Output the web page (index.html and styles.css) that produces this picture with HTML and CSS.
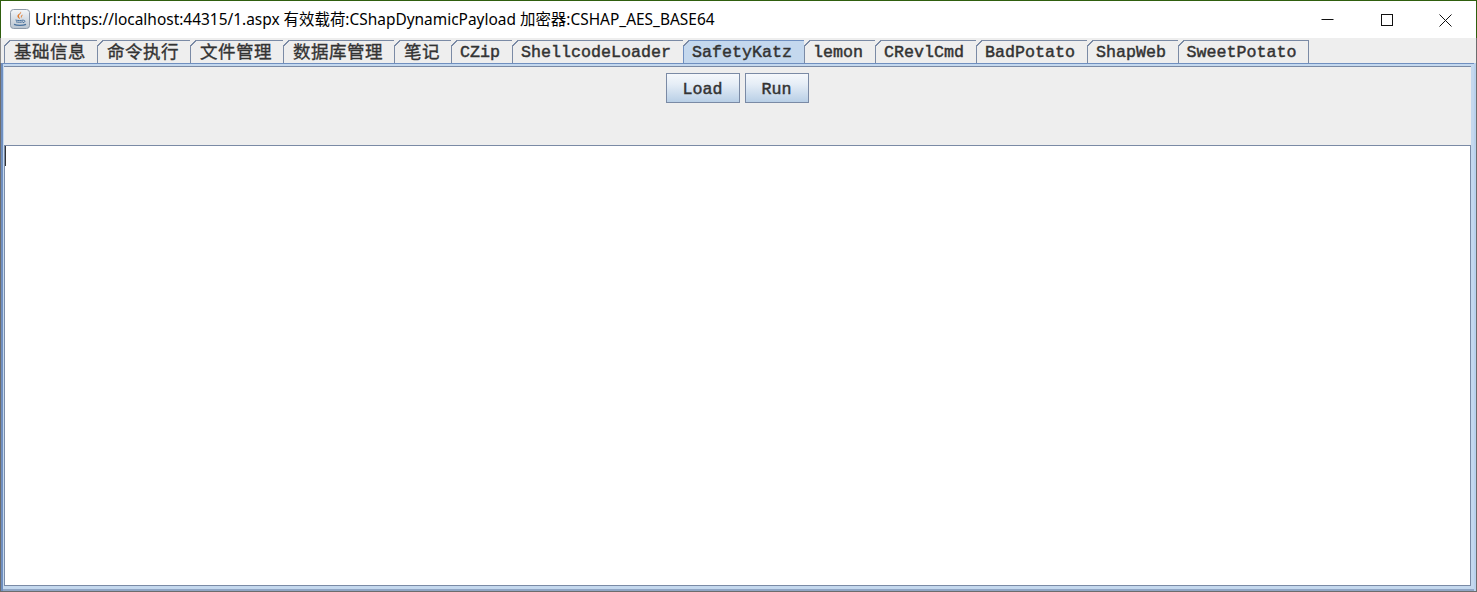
FILE: index.html
```html
<!DOCTYPE html>
<html lang="zh">
<head>
<meta charset="utf-8">
<title>Url:https://localhost:44315/1.aspx</title>
<link rel="stylesheet" href="styles.css">
</head>
<body>
<div class="window">
  <header class="titlebar">
    <svg class="app-icon" width="20" height="20" viewBox="0 0 20 20">
      <defs><linearGradient id="ibg" x1="0" y1="0" x2="0" y2="1"><stop offset="0" stop-color="#f4f6f8"/><stop offset="1" stop-color="#b9c4d0"/></linearGradient></defs>
      <rect x="0.5" y="0.5" width="19" height="19" rx="3" fill="url(#ibg)" stroke="#8d99a8"/>
      <path d="M11 2.500c1 2-2.500 3-2 5 .2 1 1 1.500 1 2.500-1.800-1-3-2-2.500-3.500.5-1.500 3-2 3.500-4zM12.500 5.500c.5 1.500-1.500 2-1.200 4-1-1.500-.3-3 1.200-4z" fill="#e0792a"/>
      <path d="M5.500 11c2 .7 6 .7 8 0M6 12.800c2 .6 5 .6 7 0M13.500 11.500c2-.5 2 1.800-.5 2.200" fill="none" stroke="#47709c" stroke-width="1"/>
      <path d="M4 15.300c3 1.300 9 1.300 12 0" fill="none" stroke="#47709c" stroke-width="1.300"/>
    </svg>
    <span class="title-text">Url:https://localhost:44315/1.aspx 有效载荷:CShapDynamicPayload 加密器:CSHAP_AES_BASE64</span>
    <div class="win-controls">
      <svg class="win-btn" width="46" height="20" viewBox="0 0 46 20"><path d="M17.500 9.500h12" stroke="#111" fill="none"/></svg>
      <svg class="win-btn" width="46" height="20" viewBox="0 0 46 20"><rect x="18.500" y="4.500" width="11" height="11" stroke="#111" fill="none"/></svg>
      <svg class="win-btn" width="46" height="20" viewBox="0 0 46 20"><path d="M17.500 4.500l12 12M29.500 4.500l-12 12" stroke="#111" fill="none"/></svg>
    </div>
  </header>
  <nav class="tabs">
    <div class="tab cjk w94">基础信息</div>
    <div class="tab cjk w93">命令执行</div>
    <div class="tab cjk w93">文件管理</div>
    <div class="tab cjk w111">数据库管理</div>
    <div class="tab cjk w57">笔记</div>
    <div class="tab w61">CZip</div>
    <div class="tab w171">ShellcodeLoader</div>
    <div class="tab active w121">SafetyKatz</div>
    <div class="tab w71">lemon</div>
    <div class="tab w101">CRevlCmd</div>
    <div class="tab w111">BadPotato</div>
    <div class="tab w91">ShapWeb</div>
    <div class="tab w130">SweetPotato</div>
  </nav>
  <main class="pane">
    <div class="toolbar">
      <button class="btn btn-load">Load</button>
      <button class="btn btn-run">Run</button>
    </div>
    <div class="editor"><span class="caret"></span></div>
  </main>
</div>
</body>
</html>
```
FILE: styles.css
```css
* { box-sizing: border-box; }
html, body { margin: 0; height: 100%; overflow: hidden; background: #eeeeee; }
.window {
  width: 1477px; height: 592px;
  display: flex; flex-direction: column;
  border-top: 1px solid #2f5f0e;
}
.titlebar {
  height: 37px; flex: none;
  display: flex; align-items: center;
  background: #fff;
  border-left: 1px solid #2f5f0e;
  border-right: 1px solid #2f5f0e;
  padding-left: 9px;
}
.app-icon { flex: none; margin-top: -1px; }
.title-text {
  margin-left: 5px;
  margin-top: -2px;
  font: 15.45px/20px "Noto Sans", "Noto Sans CJK SC", sans-serif;
  color: #000;
  white-space: nowrap;
}
.win-controls { margin-left: auto; margin-right: 8px; display: flex; gap: 13px; }
.win-btn { display: block; }
.tabs {
  height: 25px; flex: none;
  display: flex; align-items: flex-end;
  padding-left: 3px;
  background: #eeeeee;
  border-left: 1px solid #8b8b8b;
  border-right: 1px solid #6d6d6d;
}
.tab {
  position: relative;
  height: 23px;
  padding-right: 4px;
  border: 1px solid #7a8aa5;
  border-bottom: 0;
  margin-left: -1px;
  background: #eeeeee;
  color: #333;
  font: 16.67px/24px "Liberation Mono", "DejaVu Sans Mono", monospace;
  -webkit-text-stroke: 0.45px #333;
  text-align: center;
  white-space: nowrap;
}
.tab::before {
  content: "";
  position: absolute; left: -1px; top: -1px;
  width: 6px; height: 6px;
  background: linear-gradient(135deg, #eeeeee 0 46%, #7a8aa5 46% 60%, transparent 60%);
}
.tab.cjk {
  padding-right: 2px;
  font: 17.5px/20px "Noto Sans CJK SC", sans-serif;
  letter-spacing: .5px;
  -webkit-text-stroke: 0.35px #333;
}
.tab.active { background: #c4d8ee; border-color: #6f8fc0; }
.w94 { width: 94px; margin-left: 0; }
.w93 { width: 94px; }
.w111 { width: 112px; }
.w57 { width: 58px; }
.w61 { width: 62px; }
.w171 { width: 172px; }
.w121 { width: 122px; }
.w71 { width: 72px; }
.w101 { width: 102px; }
.w91 { width: 92px; }
.w130 { width: 131px; }
.pane {
  flex: 1; min-height: 0;
  display: flex; flex-direction: column;
  border-left: 1px solid #6d6d6d;
  border-right: 1px solid #6d6d6d;
  border-bottom: 1px solid #6d6d6d;
  background: #c4d8ee;
  box-shadow: inset 2px 0 0 #6f8fc0, inset -2px 0 0 #b9d1ec, inset 0 -2px 0 #8fa5c4, inset 0 1px 0 #6f8fc0, inset 0 2px 0 #c4d8ee;
  padding: 3px 5px 5px 3px;
}
.toolbar {
  height: 79px; flex: none;
  display: flex; justify-content: center; gap: 5px;
  padding: 6px 1px 0 0;
  background: #eeeeee;
  border-top: 1px solid #7a8aa5;
}
.btn {
  height: 30px; padding: 4px 0 0;
  border: 1px solid #7a8aa5; border-radius: 0;
  background: linear-gradient(#f5f8fc 0%, #e6eef7 35%, #b9cfe6 100%);
  color: #333;
  font: 16.67px/24px "Liberation Mono", "DejaVu Sans Mono", monospace;
  -webkit-text-stroke: 0.45px #333;
}
.btn-load { width: 74px; }
.btn-run { width: 64px; }
.editor {
  flex: 1; min-height: 0;
  background: #fff;
  border: 1px solid #7a8aa5;
}
.caret { display: block; width: 1px; height: 20px; background: #333; }
```
